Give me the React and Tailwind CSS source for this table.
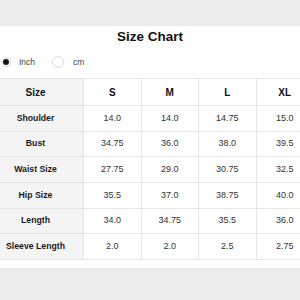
import React from "react";

const sizes = ["S", "M", "L", "XL"];

const rows = [
  ["Shoulder", "14.0", "14.0", "14.75", "15.0"],
  ["Bust", "34.75", "36.0", "38.0", "39.5"],
  ["Waist Size", "27.75", "29.0", "30.75", "32.5"],
  ["Hip Size", "35.5", "37.0", "38.75", "40.0"],
  ["Length", "34.0", "34.75", "35.5", "36.0"],
  ["Sleeve Length", "2.0", "2.0", "2.5", "2.75"],
];

const App = () => {
  return (
    <div
      className="w-[300px] h-[300px] overflow-hidden bg-[#ececec] flex flex-col"
      style={{ fontFamily: '"Liberation Sans", Arial, sans-serif' }}
    >
      <div className="h-[26px] shrink-0" />
      <div className="h-[242px] shrink-0 bg-white flex flex-col">
        {/* Title */}
        <div className="h-[22px] flex items-center justify-center">
          <h1 className="text-[13.5px] font-bold text-[#111] leading-none">Size Chart</h1>
        </div>

        {/* Unit switch */}
        <div className="mt-[6px] h-[16px] flex items-center pl-[1px] text-[8.5px] text-[#444]">
          <span className="w-[10px] h-[10px] rounded-full border border-[#d6d6d6] flex items-center justify-center">
            <span className="w-[6px] h-[6px] rounded-full bg-[#111]" />
          </span>
          <span className="ml-[8px]">Inch</span>
          <span className="ml-[17px] w-[12px] h-[12px] rounded-full border border-[#dcdcdc]" />
          <span className="ml-[9px]">cm</span>
        </div>

        {/* Table */}
        <div className="mt-[8px] -ml-[12px] w-[326px] border-t border-[#e6e6e6]">
          <div className="grid grid-cols-[96px_repeat(4,57.5px)] h-[27px] border-b border-[#e6e6e6]">
            <div className="bg-[#f4f4f4] border-r border-[#e6e6e6] flex items-center justify-center text-[10px] font-bold text-[#111]">
              Size
            </div>
            {sizes.map((s) => (
              <div
                key={s}
                className="border-r border-[#e6e6e6] flex items-center justify-center text-[10px] font-bold text-[#111]"
              >
                {s}
              </div>
            ))}
          </div>
          {rows.map((r) => (
            <div
              key={r[0]}
              className="grid grid-cols-[96px_repeat(4,57.5px)] h-[25.67px] border-b border-[#e6e6e6]"
            >
              <div className="bg-[#f4f4f4] border-r border-[#e6e6e6] flex items-center justify-center text-[8.7px] font-bold text-[#1a1a1a]">
                {r[0]}
              </div>
              {r.slice(1).map((v, i) => (
                <div
                  key={i}
                  className="border-r border-[#e6e6e6] flex items-center justify-center text-[9px] text-[#333]"
                >
                  {v}
                </div>
              ))}
            </div>
          ))}
        </div>
      </div>
    </div>
  );
};

export default App;
